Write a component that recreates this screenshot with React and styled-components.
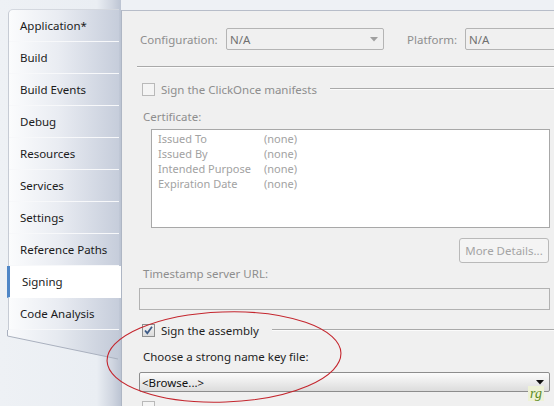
import styled, { createGlobalStyle, css } from "styled-components";

const GlobalStyle = createGlobalStyle`
  html, body { margin: 0; padding: 0; }
  body {
    font-family: "Noto Sans", "Open Sans", sans-serif;
    font-size: 11.5px;
    background: #e9edf2;
  }
`;

const tabs = [
  "Application*",
  "Build",
  "Build Events",
  "Debug",
  "Resources",
  "Services",
  "Settings",
  "Reference Paths",
  "Signing",
  "Code Analysis",
];

const certRows = [
  ["Issued To", "(none)"],
  ["Issued By", "(none)"],
  ["Intended Purpose", "(none)"],
  ["Expiration Date", "(none)"],
];

function Arrow({ color }) {
  return (
    <svg width="8" height="5" viewBox="0 0 8 5">
      <path d="M0 0 L8 0 L4 4.5 Z" fill={color} />
    </svg>
  );
}

function Check({ checked }) {
  return (
    <CheckBox $checked={checked}>
      {checked && (
        <svg width="11" height="11" viewBox="0 0 11 11">
          <path
            d="M2 5.5 L4.3 8.2 L9 1.8"
            fill="none"
            stroke="#3c5a86"
            strokeWidth="1.8"
          />
        </svg>
      )}
    </CheckBox>
  );
}

export default function App() {
  return (
    <>
      <GlobalStyle />
      <Page>
        <Sidebar>
          <TabList>
            {tabs.map((t) => (
              <Tab key={t} $active={t === "Signing"}>
                {t}
              </Tab>
            ))}
          </TabList>
          <TabTail width="112" height="32" viewBox="0 0 112 32">
            <defs>
              <linearGradient id="tailFill" x1="0" x2="1" y1="0" y2="0">
                <stop offset="0" stopColor="#f9fafc" />
                <stop offset="0.45" stopColor="#e6eaf0" />
                <stop offset="1" stopColor="#c3cad8" />
              </linearGradient>
            </defs>
            <path d="M0.5 0 L111 0 L111 29 L0.5 6 Z" fill="url(#tailFill)" />
            <path
              d="M0.5 0 L0.5 6 L111 29"
              fill="none"
              stroke="#a9b0be"
              strokeWidth="1"
            />
          </TabTail>
        </Sidebar>

        <Panel>
          <Row>
            <Label>Configuration:</Label>
            <Select $width={158}>
              <span>N/A</span>
              <Arrow color="#a0a0a0" />
            </Select>
            <Label $gap>Platform:</Label>
            <Select $width={110}>
              <span>N/A</span>
            </Select>
          </Row>

          <Rule $top={16} />

          <GroupRow $top={13}>
            <Check />
            <GroupTitle>Sign the ClickOnce manifests</GroupTitle>
            <GroupLine />
          </GroupRow>

          <FieldLabel $top={12}>Certificate:</FieldLabel>
          <CertBox>
            {certRows.map(([k, v]) => (
              <CertRow key={k}>
                <span>{k}</span>
                <span>{v}</span>
              </CertRow>
            ))}
          </CertBox>

          <ButtonRow>
            <Button>More Details...</Button>
          </ButtonRow>

          <FieldLabel $top={3}>Timestamp server URL:</FieldLabel>
          <TextBox />

          <GroupRow $top={12}>
            <Check checked />
            <GroupTitle $enabled>Sign the assembly</GroupTitle>
            <GroupLine />
          </GroupRow>

          <FieldLabel $top={11} $enabled>
            Choose a strong name key file:
          </FieldLabel>
          <Combo>
            <span>&lt;Browse...&gt;</span>
            <Arrow color="#111" />
          </Combo>

          <GroupRow $top={7}>
            <Check />
          </GroupRow>
        </Panel>

        <Annotation width="554" height="406" viewBox="0 0 554 406">
          <ellipse
            cx="224"
            cy="357"
            rx="117"
            ry="45"
            fill="none"
            stroke="#c4262e"
            strokeWidth="1.1"
            transform="rotate(-2 224 357)"
          />
        </Annotation>
        <Watermark>rg</Watermark>
      </Page>
    </>
  );
}

const Page = styled.div`
  position: relative;
  display: flex;
  width: 554px;
  height: 406px;
  overflow: hidden;
  background: #eef1f5;
`;

const Sidebar = styled.div`
  width: 121px;
  flex-shrink: 0;
  padding: 9px 0 0 8px;
  box-sizing: border-box;
  background: linear-gradient(
    to right,
    #eef1f5 0%,
    #eaeef3 80%,
    #cfd5e0 93%,
    #bcc4d3 100%
  );
`;

const TabList = styled.div`
  width: 110px;
  border-top-left-radius: 5px;
  border-left: 1px solid #c6cbd4;
  border-top: 1px solid #d4d8df;
  background: linear-gradient(to right, #fbfcfd 0%, #e9ecf2 45%, #c6cddb 100%);
`;

const Tab = styled.div`
  height: 32px;
  line-height: 31px;
  padding-left: 11px;
  color: #1b1b1b;
  white-space: nowrap;
  box-sizing: border-box;
  border-bottom: 1px solid #f7f8fa;
  ${(p) =>
    p.$active &&
    css`
      background: #fff;
      margin-right: -3px;
      margin-left: -2px;
      padding-left: 12px;
      border-left: 3px solid #4f86c6;
      border-bottom-color: #fff;
    `}
`;

const TabTail = styled.svg`
  display: block;
  margin-left: -1px;
`;

const Panel = styled.div`
  flex: 1;
  margin-top: 10px;
  padding: 17px 4px 0 17px;
  background: #f0f0f0;
  border-left: 1px solid #aeb6c4;
  border-top: 1px solid #b7bdc9;
  display: flex;
  flex-direction: column;
  min-width: 0;
  & > * {
    flex-shrink: 0;
  }
`;

const Row = styled.div`
  display: flex;
  align-items: center;
  height: 22px;
  white-space: nowrap;
`;

const Label = styled.span`
  color: #8e8e8e;
  flex-shrink: 0;
  ${(p) =>
    p.$gap
      ? css`
          margin: 0 8px 0 23px;
        `
      : css`
          width: 86px;
          margin-left: 1px;
        `}
`;

const Select = styled.div`
  width: ${(p) => p.$width}px;
  height: 22px;
  flex-shrink: 0;
  box-sizing: border-box;
  border: 1px solid #b4b4b4;
  border-radius: 2px;
  background: #f0f0f0;
  display: flex;
  align-items: center;
  justify-content: space-between;
  padding: 0 5px 0 3px;
  color: #707070;
`;

const Rule = styled.div`
  margin-top: ${(p) => p.$top}px;
  margin-left: -2px;
  margin-right: -4px;
  height: 0;
  border-top: 1px solid #a9a9a9;
  border-bottom: 1px solid #fbfbfb;
`;

const GroupRow = styled.div`
  margin-top: ${(p) => p.$top}px;
  margin-right: -4px;
  height: 16px;
  display: flex;
  align-items: center;
  padding-left: 3px;
`;

const CheckBox = styled.div`
  width: 13px;
  height: 13px;
  box-sizing: border-box;
  flex-shrink: 0;
  border: 1px solid ${(p) => (p.$checked ? "#8e8f8f" : "#b9b9b9")};
  background: ${(p) =>
    p.$checked ? "linear-gradient(#f2f2f2, #dcdcdc)" : "#f4f4f4"};
  display: flex;
  align-items: center;
  justify-content: center;
`;

const GroupTitle = styled.span`
  margin-left: 6px;
  color: ${(p) => (p.$enabled ? "#1e1e1e" : "#8e8e8e")};
  white-space: nowrap;
`;

const GroupLine = styled.div`
  flex: 1;
  margin-left: 13px;
  border-top: 1px solid #a9a9a9;
  border-bottom: 1px solid #fbfbfb;
`;

const FieldLabel = styled.div`
  margin-top: ${(p) => p.$top}px;
  padding-left: 4px;
  height: 16px;
  line-height: 16px;
  color: ${(p) => (p.$enabled ? "#1e1e1e" : "#8e8e8e")};
`;

const CertBox = styled.div`
  margin: 4px 0 0 12px;
  height: 99px;
  box-sizing: border-box;
  border: 1px solid #a8a8a8;
  background: #fff;
  padding: 1px 0 0 6px;
`;

const CertRow = styled.div`
  display: grid;
  grid-template-columns: 106px auto;
  height: 15px;
  line-height: 15px;
  font-size: 11px;
  color: #a2a2a2;
`;

const ButtonRow = styled.div`
  margin-top: 10px;
  display: flex;
  justify-content: flex-end;
  padding-right: 1px;
`;

const Button = styled.div`
  width: 90px;
  height: 25px;
  box-sizing: border-box;
  border: 1px solid #b9b9b9;
  border-radius: 3px;
  background: #f4f4f4;
  color: #a4a4a4;
  display: flex;
  align-items: center;
  justify-content: center;
`;

const TextBox = styled.div`
  margin-top: 6px;
  height: 22px;
  box-sizing: border-box;
  border: 1px solid #b2b2b2;
  background: #f0f0f0;
`;

const Combo = styled.div`
  margin-top: 7px;
  height: 20px;
  box-sizing: border-box;
  border: 1px solid #8d8d8d;
  border-radius: 2px;
  background: linear-gradient(#fbfbfb 0%, #ececec 50%, #dcdcdc 100%);
  display: flex;
  align-items: center;
  justify-content: space-between;
  padding: 0 5px 0 2px;
  color: #111;
`;

const Annotation = styled.svg`
  position: absolute;
  left: 0;
  top: 0;
  pointer-events: none;
`;

const Watermark = styled.div`
  position: absolute;
  left: 528px;
  top: 386px;
  padding: 0 2px;
  font-family: "Liberation Serif", serif;
  font-style: italic;
  font-size: 14px;
  line-height: 15px;
  color: #5b8a22;
  background: #eef2d6;
`;
